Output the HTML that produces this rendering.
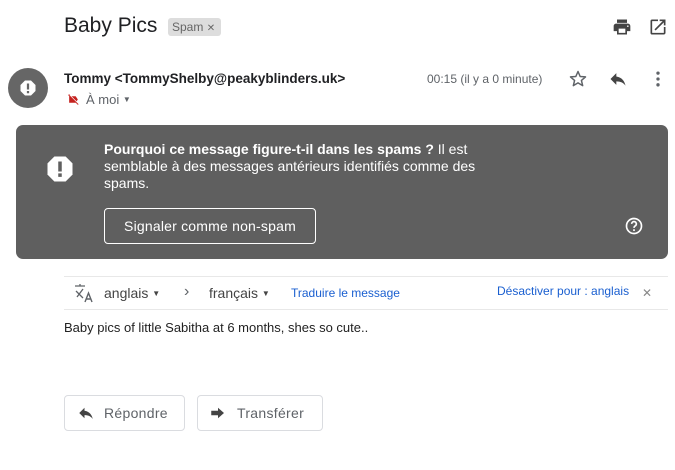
<!DOCTYPE html><html><head><meta charset="utf-8"><style>
body{margin:0;width:675px;height:470px;background:#fff;font-family:"Liberation Sans",Arial,sans-serif;position:relative;overflow:hidden}
.a{position:absolute;white-space:nowrap}
</style></head><body>
<div class="a" style="left:64px;top:14px;font-size:21px;color:#202124">Baby Pics</div>
<div class="a" style="left:168px;top:18px;height:18px;width:53px;background:#ddd;border-radius:3px;font-size:12px;color:#666;line-height:18px;padding-left:4px;box-sizing:border-box">Spam <span style="font-size:10px">✕</span></div>
<svg class="a" style="left:612px;top:17px" width="20" height="20" viewBox="0 0 24 24"><path fill="#444" d="M19 8H5c-1.66 0-3 1.34-3 3v6h4v4h12v-4h4v-6c0-1.66-1.340-3-3-3zm-3 11H8v-5h8v5zm3-7c-.55 0-1-.45-1-1s.45-1 1-1 1 .45 1 1-.45 1-1 1zm-1-9H6v4h12V3z"/></svg>
<svg class="a" style="left:648px;top:17px" width="20" height="20" viewBox="0 0 24 24"><path fill="#444" d="M19 19H5V5h7V3H5a2 2 0 00-2 2v14a2 2 0 002 2h14c1.1 0 2-.9 2-2v-7h-2v7zM14 3v2h3.59l-9.83 9.830 1.41 1.41L19 6.41V10h2V3h-7z"/></svg>
<div class="a" style="left:8px;top:68px;width:40px;height:40px;border-radius:50%;background:#666"></div>
<svg class="a" style="left:19px;top:79px" width="18" height="18" viewBox="0 0 24 24"><path fill="#fff" d="M8 2h8l6 6v8l-6 6H8l-6-6V8z"/><rect x="10.5" y="6" width="3" height="8" fill="#666"/><rect x="10.5" y="16" width="3" height="3" fill="#666"/></svg>
<div class="a" style="left:64px;top:71px;font-size:13.5px;font-weight:bold;color:#202124">Tommy &lt;TommyShelby@peakyblinders.uk&gt;</div>
<svg class="a" style="left:67px;top:93px" width="13" height="13" viewBox="0 0 24 24"><path fill="#c5221f" d="M4 6h12l4 6-4 6H4z"/><path stroke="#c5221f" stroke-width="2.5" d="M3 3l18 18"/><path stroke="#fff" stroke-width="1.2" d="M5 3.5l17 17"/></svg>
<div class="a" style="left:86px;top:92px;font-size:13px;color:#5f6368">À moi <span style="font-size:8px;vertical-align:2px">▼</span></div>
<div class="a" style="left:427px;top:72px;font-size:12px;color:#5f6368">00:15 (il y a 0 minute)</div>
<svg class="a" style="left:568px;top:69px" width="20" height="20" viewBox="0 0 24 24"><path fill="none" stroke="#5f6368" stroke-width="1.8" stroke-linejoin="round" d="M12 3l2.6 6 6.4.5-4.9 4.2 1.5 6.3L12 16.6 6.4 20l1.5-6.3L3 9.5l6.4-.5z"/></svg>
<svg class="a" style="left:608px;top:69px" width="20" height="20" viewBox="0 0 24 24"><path fill="#444" d="M10 9V5l-7 7 7 7v-4.1c5 0 8.5 1.6 11 5.1-1-5-4-10-11-11z"/></svg>
<svg class="a" style="left:648px;top:69px" width="20" height="20" viewBox="0 0 24 24"><circle cx="12" cy="5" r="2" fill="#5f6368"/><circle cx="12" cy="12" r="2" fill="#5f6368"/><circle cx="12" cy="19" r="2" fill="#5f6368"/></svg>
<div class="a" style="left:16px;top:125px;width:652px;height:134px;background:#5f5f5f;border-radius:7px"></div>
<svg class="a" style="left:45px;top:154px" width="30" height="30" viewBox="0 0 24 24"><path fill="#fff" d="M7.5 2h9l5.5 5.5v9L16.5 22h-9L2 16.5v-9z"/><rect x="10.6" y="6" width="2.8" height="8" fill="#5f5f5f"/><rect x="10.6" y="15.5" width="2.8" height="2.8" fill="#5f5f5f"/></svg>
<div class="a" style="left:104px;top:141px;font-size:14px;line-height:17px;color:#fff;white-space:normal;width:400px"><b>Pourquoi ce message figure-t-il dans les spams ?</b> Il est semblable à des messages antérieurs identifiés comme des spams.</div>
<div class="a" style="left:104px;top:208px;width:212px;height:36px;box-sizing:border-box;border:1px solid #fff;border-radius:4px;color:#fff;font-size:14px;line-height:34px;text-align:center;letter-spacing:.2px">Signaler comme non-spam</div>
<svg class="a" style="left:624px;top:216px" width="20" height="20" viewBox="0 0 24 24"><circle cx="12" cy="12" r="9" fill="none" stroke="#fff" stroke-width="2"/><path d="M9.2 9.5a2.8 2.8 0 115 1.7c-1 .9-2.2 1.3-2.2 3" fill="none" stroke="#fff" stroke-width="2"/><circle cx="12" cy="17" r="1.2" fill="#fff"/></svg>
<div class="a" style="left:64px;top:276px;width:604px;height:1px;background:#e8e8e8"></div>
<div class="a" style="left:64px;top:309px;width:604px;height:1px;background:#e8e8e8"></div>
<svg class="a" style="left:74px;top:283px" width="20" height="20" viewBox="0 0 20 20"><path fill="none" stroke="#5f6368" stroke-width="1.3" d="M1 3h10M6 1v2M2 8l7 7M9 6l-6 8"/><path fill="none" stroke="#5f6368" stroke-width="1.4" d="M11 19l3.5-9 3.5 9M12.3 16h4.4"/></svg>
<div class="a" style="left:104px;top:285px;font-size:14px;color:#444">anglais <span style="font-size:8px;vertical-align:2px">▼</span></div>
<div class="a" style="left:184px;top:283px;font-size:16px;color:#5f6368">›</div>
<div class="a" style="left:209px;top:285px;font-size:14px;color:#444">français <span style="font-size:8px;vertical-align:2px">▼</span></div>
<div class="a" style="left:291px;top:286px;font-size:12px;color:#1a5fd0">Traduire le message</div>
<div class="a" style="left:497px;top:284px;font-size:12px;color:#1a5fd0">Désactiver pour : anglais</div>
<div class="a" style="left:642px;top:286px;font-size:12px;color:#888">✕</div>
<div class="a" style="left:64px;top:320px;font-size:13px;color:#222">Baby pics of little Sabitha at 6 months, shes so cute..</div>
<div class="a" style="left:64px;top:395px;width:121px;height:36px;box-sizing:border-box;border:1px solid #dadce0;border-radius:4px"></div>
<svg class="a" style="left:77px;top:404px" width="18" height="18" viewBox="0 0 24 24"><path fill="#444" d="M10 9V5l-7 7 7 7v-4.1c5 0 8.5 1.6 11 5.1-1-5-4-10-11-11z"/></svg>
<div class="a" style="left:104px;top:405px;font-size:14px;color:#5f6368;letter-spacing:.3px">Répondre</div>
<div class="a" style="left:197px;top:395px;width:126px;height:36px;box-sizing:border-box;border:1px solid #dadce0;border-radius:4px"></div>
<svg class="a" style="left:209px;top:404px" width="18" height="18" viewBox="0 0 24 24"><path fill="#444" d="M3 9h9V5l8 7-8 7v-4H3z"/></svg>
<div class="a" style="left:237px;top:405px;font-size:14px;color:#5f6368;letter-spacing:.3px">Transférer</div>
</body></html>
